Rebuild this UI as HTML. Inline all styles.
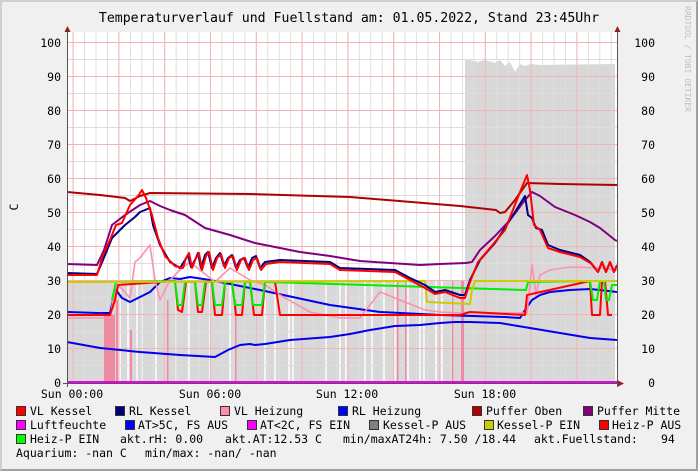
<!DOCTYPE html>
<html><head><meta charset="utf-8"><style>
html,body{margin:0;padding:0;}
body{width:698px;height:471px;overflow:hidden;background:#f0f0f0;position:relative;font-family:"DejaVu Sans Mono","Liberation Mono",monospace;}
.frame{position:absolute;left:0;top:0;border-top:2px solid #d0d0d0;border-left:2px solid #d0d0d0;border-right:2px solid #a0a0a0;border-bottom:2px solid #a0a0a0;box-sizing:content-box;width:694px;height:467px}
.t{position:absolute;font-size:11.5px;color:#000;white-space:pre;line-height:12px}
.sq{position:absolute;width:8px;height:8px;border:1px solid #333}
</style></head><body>
<div class="frame"></div>
<svg width="698" height="471" style="position:absolute;left:0;top:0" xmlns="http://www.w3.org/2000/svg">
<defs>
<pattern id="mv" x="72.6" y="0" width="11.45" height="10" patternUnits="userSpaceOnUse"><line x1="0.5" y1="0" x2="0.5" y2="10" stroke="#dedede" stroke-width="1"/></pattern>
<pattern id="Mv" x="72.6" y="0" width="45.8" height="10" patternUnits="userSpaceOnUse"><line x1="0.5" y1="0" x2="0.5" y2="10" stroke="#f2b4b4" stroke-width="1"/></pattern>
</defs>
<rect x="67" y="32" width="551" height="351" fill="#fff"/>
<polygon points="67,383 67,281 465,281 465,60 470,60 478,62 485,60 495,63 500,60 505,66 510,62 515,72 520,64 525,66 530,64 540,65 615,64 615,383" fill="#d8d8d8"/>
<g stroke="#fff" stroke-width="1.5">
<line x1="120" y1="281" x2="120" y2="383"/><line x1="128" y1="281" x2="128" y2="383"/><line x1="137" y1="281" x2="137" y2="383"/><line x1="142" y1="281" x2="142" y2="383"/><line x1="156" y1="281" x2="156" y2="383"/><line x1="176" y1="281" x2="176" y2="383"/><line x1="189" y1="281" x2="189" y2="383"/><line x1="210" y1="281" x2="210" y2="383"/><line x1="230" y1="281" x2="230" y2="383"/><line x1="265" y1="281" x2="265" y2="383"/><line x1="275" y1="281" x2="275" y2="383"/><line x1="289" y1="281" x2="289" y2="383"/><line x1="293" y1="281" x2="293" y2="383"/><line x1="326" y1="281" x2="326" y2="383"/><line x1="340" y1="281" x2="340" y2="383"/><line x1="346" y1="281" x2="346" y2="383"/><line x1="365" y1="281" x2="365" y2="383"/><line x1="372" y1="281" x2="372" y2="383"/><line x1="384" y1="281" x2="384" y2="383"/><line x1="395" y1="281" x2="395" y2="383"/><line x1="408" y1="281" x2="408" y2="383"/><line x1="420" y1="281" x2="420" y2="383"/><line x1="424" y1="281" x2="424" y2="383"/><line x1="436" y1="281" x2="436" y2="383"/><line x1="442" y1="281" x2="442" y2="383"/><line x1="453" y1="281" x2="453" y2="383"/><line x1="462" y1="281" x2="462" y2="383"/>
</g>
<rect x="67" y="32" width="551" height="351" fill="url(#mv)"/>
<g stroke="#dedede" stroke-width="1">
<line x1="67" y1="365.5" x2="618" y2="365.5"/><line x1="67" y1="331.5" x2="618" y2="331.5"/><line x1="67" y1="297.5" x2="618" y2="297.5"/><line x1="67" y1="263.5" x2="618" y2="263.5"/><line x1="67" y1="229.5" x2="618" y2="229.5"/><line x1="67" y1="195.5" x2="618" y2="195.5"/><line x1="67" y1="161.5" x2="618" y2="161.5"/><line x1="67" y1="127.5" x2="618" y2="127.5"/><line x1="67" y1="93.5" x2="618" y2="93.5"/><line x1="67" y1="59.5" x2="618" y2="59.5"/>
</g>
<rect x="67" y="32" width="551" height="351" fill="url(#Mv)"/>
<g stroke="#f2b4b4" stroke-width="1">
<line x1="67" y1="348.5" x2="618" y2="348.5"/><line x1="67" y1="314.5" x2="618" y2="314.5"/><line x1="67" y1="280.5" x2="618" y2="280.5"/><line x1="67" y1="246.5" x2="618" y2="246.5"/><line x1="67" y1="212.5" x2="618" y2="212.5"/><line x1="67" y1="178.5" x2="618" y2="178.5"/><line x1="67" y1="144.5" x2="618" y2="144.5"/><line x1="67" y1="110.5" x2="618" y2="110.5"/><line x1="67" y1="76.5" x2="618" y2="76.5"/><line x1="67" y1="42.5" x2="618" y2="42.5"/>
</g>
<g fill="#f08aa0"><rect x="104" y="315" width="11" height="68"/><rect x="116" y="300" width="2" height="83"/><rect x="130" y="330" width="2" height="53"/><rect x="397" y="281" width="1.5" height="102"/><rect x="405" y="281" width="1.5" height="102"/><rect x="452" y="281" width="1.5" height="102"/><rect x="461" y="281" width="3" height="102"/><rect x="167" y="300" width="1.5" height="83"/><rect x="235" y="300" width="1.5" height="83"/></g>
<g fill="none" stroke-width="2" stroke-linejoin="round">
<polyline stroke="#0000ee" points="67,342 100,348 140,352 180,355 215,357 228,350 240,345 250,344 255,345 265,344 290,340 330,337 350,334 370,330 395,326 420,325 440,323 455,322 470,322 500,323 530,328 560,333 590,338 617,340"/>
<polyline stroke="#0000ee" points="67,312 98,313 110,313 113,300 116,290 122,298 130,302 140,297 150,292 160,282 170,278 180,279 190,277 210,280 260,290 330,305 380,312 440,315 505,317 520,318 527,307 532,300 540,295 550,292 570,290 590,289 600,290 617,292"/>
<polyline stroke="#ff8fb0" stroke-width="1.6" points="67,318 100,318 110,318 113,300 118,285 125,292 130,298 135,262 140,258 146,250 150,245 155,280 160,300 170,280 180,270 190,262 200,270 215,282 230,268 250,280 265,285 280,295 310,312 340,318 360,318 380,292 400,300 425,310 440,312 462,313 470,312 500,313 527,313 532,265 536,295 540,275 550,270 570,267 600,268 617,270"/>
<polyline stroke="#ff0000" points="67,315 110,315 115,300 118,285 175,281 178,310 182,312 186,282 195,282 198,312 202,312 206,282 212,282 215,315 222,315 225,282 232,282 236,315 242,315 245,282 250,282 254,315 262,315 265,282 275,282 280,315 460,315 470,312 525,315 527,295 590,281 592,315 600,315 602,281 605,281 608,315 612,315"/>
<polyline stroke="#00ee00" points="112,300 116,282 175,281 178,305 182,305 185,282 195,282 198,305 202,305 205,282 212,282 215,305 222,305 225,282 232,282 235,305 242,305 245,282 250,282 253,305 262,305 265,282 268,282 526,290 528,282 590,281 593,300 597,300 600,281 604,281 606,300 609,300 612,285 617,285"/>
<polyline stroke="#cccc00" points="67,282 425,281 427,302 470,304 472,290 475,281 617,281"/>
<polyline stroke="#800080" points="67,264 97,265 104,250 112,225 125,215 140,205 150,201 160,206 170,210 185,215 205,228 230,235 255,243 280,248 300,252 330,256 360,261 390,263 420,265 440,264 466,263 472,262 480,250 495,236 510,220 525,200 532,192 540,196 555,207 575,215 590,222 600,228 615,240 617,241"/>
<polyline stroke="#b00000" points="67,192 100,195 125,198 130,201 140,196 150,193 250,194 350,197 460,206 496,210 500,213 505,212 515,200 527,183 560,184 617,185"/>
<polyline stroke="#000080" points="67,273 97,274 103,260 112,238 125,225 135,217 140,212 145,210 150,208 153,225 160,245 170,262 180,268 185,260 188,255 191,267 195,260 198,253 201,268 205,255 208,252 212,268 216,258 220,253 224,266 228,258 232,255 236,268 240,260 244,258 248,268 252,258 256,256 260,268 265,262 280,260 330,262 340,268 395,270 410,278 425,285 435,292 445,290 460,295 465,295 470,280 480,260 495,243 510,220 525,196 528,215 532,218 536,228 542,230 548,245 560,250 580,255 590,262 598,272 602,262 606,272 610,262 614,272 617,265"/>
<polyline stroke="#ff0000" points="67,275 97,275 103,255 110,240 116,225 122,223 130,205 138,196 142,190 146,198 152,215 158,238 165,256 175,266 183,268 186,258 189,253 192,268 196,258 199,253 202,270 206,256 209,252 213,270 217,258 221,254 225,268 229,258 233,256 237,270 241,260 245,258 249,270 253,260 257,258 261,270 266,264 280,262 330,264 340,270 395,272 410,280 425,288 435,294 445,292 460,298 465,298 470,282 478,262 490,248 505,230 520,192 527,175 530,190 534,225 540,230 548,248 560,252 580,257 592,264 598,272 602,262 606,272 610,262 614,272 617,265"/>
<line x1="67" y1="382" x2="617" y2="382" stroke="#ee00ee" stroke-width="2"/>
</g>
<line x1="67.5" y1="30" x2="67.5" y2="387" stroke="#555"/>
<line x1="617.5" y1="30" x2="617.5" y2="387" stroke="#555"/>
<line x1="63" y1="383.5" x2="620" y2="383.5" stroke="#555"/>
<polygon points="64.5,32 70.5,32 67.5,26" fill="#902020"/>
<polygon points="614.5,32 620.5,32 617.5,26" fill="#902020"/>
<polygon points="618,380.5 618,386.5 624,383.5" fill="#902020"/>
<g font-family="DejaVu Sans Mono,Liberation Mono,monospace" font-size="11.5" fill="#000">
<text x="349" y="22" text-anchor="middle" font-size="13.2">Temperaturverlauf und Fuellstand am: 01.05.2022, Stand 23:45Uhr</text>
<g text-anchor="end"><text x="61" y="47">100</text><text x="61" y="81">90</text><text x="61" y="115">80</text><text x="61" y="149">70</text><text x="61" y="183">60</text><text x="61" y="217">50</text><text x="61" y="251">40</text><text x="61" y="285">30</text><text x="61" y="319">20</text><text x="61" y="353">10</text><text x="61" y="387">0</text></g>
<g text-anchor="end"><text x="655" y="47">100</text><text x="655" y="81">90</text><text x="655" y="115">80</text><text x="655" y="149">70</text><text x="655" y="183">60</text><text x="655" y="217">50</text><text x="655" y="251">40</text><text x="655" y="285">30</text><text x="655" y="319">20</text><text x="655" y="353">10</text><text x="655" y="387">0</text></g>
<g text-anchor="middle"><text x="72" y="398">Sun 00:00</text><text x="210" y="398">Sun 06:00</text><text x="347" y="398">Sun 12:00</text><text x="485" y="398">Sun 18:00</text></g>
<text x="18" y="207" transform="rotate(-90 18 207)" text-anchor="middle">C</text>
<text x="685" y="6" transform="rotate(90 685 6)" font-size="8" fill="#c0c0c0">RRDTOOL / TOBI OETIKER</text>
</g>
</svg>
<div class="sq" style="left:16px;top:406px;background:#f00"></div><div class="t" style="left:30px;top:405px">VL Kessel</div>
<div class="sq" style="left:115px;top:406px;background:#000080"></div><div class="t" style="left:129px;top:405px">RL Kessel</div>
<div class="sq" style="left:220px;top:406px;background:#ff8fa8"></div><div class="t" style="left:234px;top:405px">VL Heizung</div>
<div class="sq" style="left:338px;top:406px;background:#00f"></div><div class="t" style="left:352px;top:405px">RL Heizung</div>
<div class="sq" style="left:472px;top:406px;background:#b00000"></div><div class="t" style="left:486px;top:405px">Puffer Oben</div>
<div class="sq" style="left:583px;top:406px;background:#800080"></div><div class="t" style="left:597px;top:405px">Puffer Mitte</div>
<div class="sq" style="left:16px;top:420px;background:#f0f"></div><div class="t" style="left:30px;top:419px">Luftfeuchte</div>
<div class="sq" style="left:125px;top:420px;background:#00f"></div><div class="t" style="left:138px;top:419px">AT&gt;5C, FS AUS</div>
<div class="sq" style="left:247px;top:420px;background:#f0f"></div><div class="t" style="left:260px;top:419px">AT&lt;2C, FS EIN</div>
<div class="sq" style="left:369px;top:420px;background:#808080"></div><div class="t" style="left:383px;top:419px">Kessel-P AUS</div>
<div class="sq" style="left:484px;top:420px;background:#cccc00"></div><div class="t" style="left:497px;top:419px">Kessel-P EIN</div>
<div class="sq" style="left:599px;top:420px;background:#f00"></div><div class="t" style="left:612px;top:419px">Heiz-P AUS</div>
<div class="sq" style="left:16px;top:434px;background:#0f0"></div><div class="t" style="left:30px;top:433px">Heiz-P EIN</div>
<div class="t" style="left:120px;top:433px">akt.rH: 0.00</div>
<div class="t" style="left:225px;top:433px">akt.AT:12.53 C</div>
<div class="t" style="left:343px;top:433px">min/maxAT24h: 7.50 /18.44</div>
<div class="t" style="left:534px;top:433px">akt.Fuellstand:</div>
<div class="t" style="left:661px;top:433px">94</div>
<div class="t" style="left:16px;top:447px">Aquarium: -nan C</div>
<div class="t" style="left:145px;top:447px">min/max: -nan/ -nan</div>
</body></html>
